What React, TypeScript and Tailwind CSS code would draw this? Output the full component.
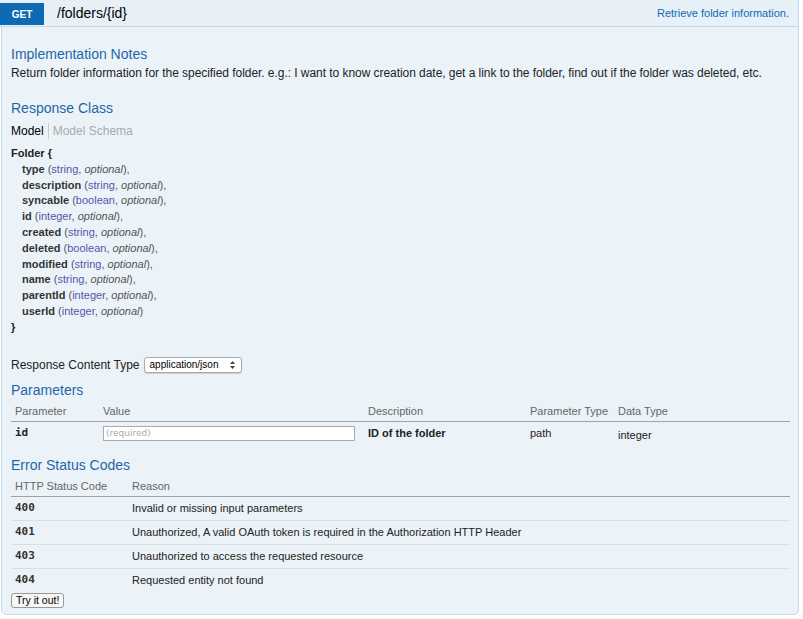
const fields: [string, string][] = [
  ["type", "string"],
  ["description", "string"],
  ["syncable", "boolean"],
  ["id", "integer"],
  ["created", "string"],
  ["deleted", "boolean"],
  ["modified", "string"],
  ["name", "string"],
  ["parentId", "integer"],
  ["userId", "integer"],
];

const errors: [string, string][] = [
  ["400", "Invalid or missing input parameters"],
  ["401", "Unauthorized, A valid OAuth token is required in the Authorization HTTP Header"],
  ["403", "Unauthorized to access the requested resource"],
  ["404", "Requested entity not found"],
];

function Heading({ children }: { children: React.ReactNode }) {
  return <h4 className="text-[14px] leading-[18px] text-[#1f66a8]">{children}</h4>;
}

export default function App() {
  return (
    <div className="w-[803px] h-[619px] bg-white font-['Liberation_Sans',Arial,sans-serif] text-[#222]">
      <div className="w-[799px]">
        <div className="flex items-center h-[27px] bg-[#e7f0f7] border-b border-[#c3d9ec] border-r pt-[1px]">
          <span className="mt-[1px] flex items-center justify-center w-[44px] h-[22px] bg-[#0f6ab4] text-white text-[10px] font-bold">
            GET
          </span>
          <span className="ml-[13px] text-[14px] text-black">/folders/&#123;id&#125;</span>
          <span className="ml-auto mr-[9px] text-[11px] text-[#0f6ab4]">Retrieve folder information.</span>
        </div>

        <div className="h-[588px] bg-[#ebf3f9] border border-t-0 border-[#c3d9ec] rounded-b-[5px] ml-[1px] pl-[9px] pr-[10px] pt-[18px]">
          <Heading>Implementation Notes</Heading>
          <p className="text-[12px] leading-[18px] mt-[1px] tracking-[-0.05px]">
            Return folder information for the specified folder. e.g.: I want to know creation date, get a link to the folder, find out if the folder was deleted, etc.
          </p>

          <div className="mt-[17px]">
            <Heading>Response Class</Heading>
          </div>
          <div className="flex items-center text-[12px] leading-[16px] mt-[6px]">
            <span className="pr-[4px] border-r border-[#ccc] text-black">Model</span>
            <span className="pl-[4px] text-[#aaa]">Model Schema</span>
          </div>

          <div className="mt-[7px] text-[11px] leading-[15.8px]">
            <div className="font-bold">Folder &#123;</div>
            {fields.map(([name, type], i) => (
              <div key={name} className="pl-[11px]">
                <span className="font-bold text-[#333]">{name}</span>{" "}
                <span className="text-[#555]">(</span>
                <span className="text-[#55a]">{type}</span>
                <span className="text-[#555]">, </span>
                <span className="italic text-[#555]">optional</span>
                <span className="text-[#555]">){i < fields.length - 1 ? "," : ""}</span>
              </div>
            ))}
            <div className="font-bold">&#125;</div>
          </div>

          <div className="flex items-center mt-[21px] text-[12px] leading-[16px]">
            <span>Response Content Type</span>
            <span className="ml-[4px] flex items-center h-[16px] w-[98px] border border-[#aaa] rounded-[3px] bg-white pl-[5px] pr-[6px] text-[10px] text-black shadow-[0_1px_1px_rgba(0,0,0,0.15)]">
              <span>application/json</span>
              <svg className="ml-auto" width="5" height="8" viewBox="0 0 5 8">
                <path d="M2.5 0 L5 3 L0 3 Z M0 5 L5 5 L2.5 8 Z" fill="#444" />
              </svg>
            </span>
          </div>

          <div className="mt-[8px]">
            <Heading>Parameters</Heading>
          </div>
          <div className="mt-[3px] w-[779px]">
            <div className="grid grid-cols-[88px_265px_162px_88px_1fr] text-[11px] text-[#666] h-[20px] items-center border-b border-[#9aa3ab] pl-[4px]">
              <span>Parameter</span>
              <span>Value</span>
              <span>Description</span>
              <span>Parameter Type</span>
              <span>Data Type</span>
            </div>
            <div className="grid grid-cols-[88px_265px_162px_88px_1fr] text-[11px] h-[24px] items-center pl-[4px]">
              <span className="font-bold font-['DejaVu_Sans_Mono',monospace] text-[11px]">id</span>
              <span>
                <span className="flex items-center w-[252px] h-[15px] border border-[#aaa] bg-white px-[2px] text-[9px] text-[#aaa] font-['DejaVu_Sans',sans-serif]">
                  (required)
                </span>
              </span>
              <span className="font-bold">ID of the folder</span>
              <span>path</span>
              <span className="mt-[3px]">integer</span>
            </div>
          </div>

          <div className="mt-[10px]">
            <Heading>Error Status Codes</Heading>
          </div>
          <div className="mt-[3px] w-[779px]">
            <div className="grid grid-cols-[117px_1fr] text-[11px] text-[#666] h-[20px] items-center border-b border-[#9aa3ab] pl-[4px]">
              <span>HTTP Status Code</span>
              <span>Reason</span>
            </div>
            {errors.map(([code, reason], i) => (
              <div
                key={code}
                className={`grid grid-cols-[117px_1fr] text-[11px] h-[24px] items-center pl-[4px] ${
                  i < errors.length - 1 ? "border-b border-[#d8e0e6]" : ""
                }`}
              >
                <span className="font-bold font-['DejaVu_Sans_Mono',monospace] text-[11px] text-[#333]">{code}</span>
                <span>{reason}</span>
              </div>
            ))}
          </div>

          <button className="block mt-[0px] h-[15px] px-[4px] text-[10.5px] leading-[13px] bg-[#f7f7f7] border border-[#999] rounded-[3px] text-black">
            Try it out!
          </button>
        </div>
      </div>
    </div>
  );
}
